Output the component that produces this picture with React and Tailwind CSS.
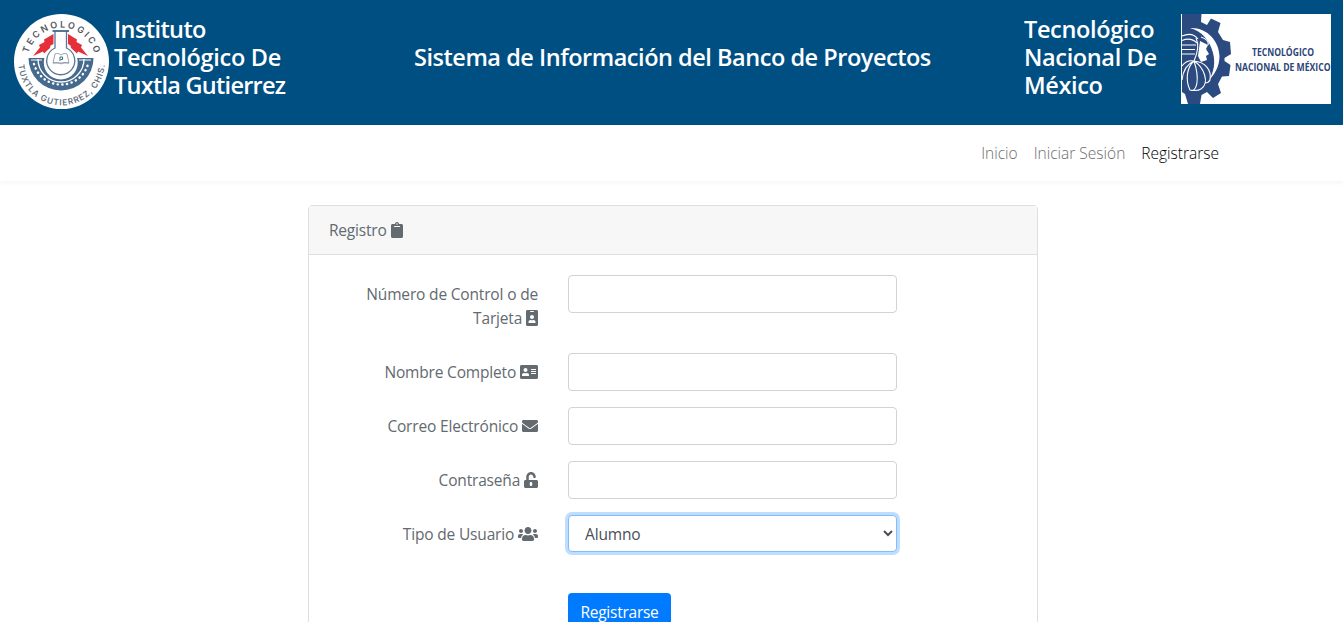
import React from "react";
import { FaClipboard, FaIdBadge, FaAddressCard, FaEnvelope, FaUnlockAlt, FaUsers } from "react-icons/fa";

function SealLogo() {
  return (
    <svg className="block size-[95px] shrink-0" viewBox="0 0 95 95">
      <defs>
        <path id="sealTop" d="M13.500 47.500 A34 34 0 0 1 81.500 47.500" />
        <path id="sealBottom" d="M4.500 44 A43.200 43.200 0 1 0 90.500 44" />
      </defs>
      <circle cx="47.5" cy="47.5" r="47.5" fill="#fff" />
      <path d="M39.500 20 L30 25.500 L30.500 28 L25 31 L26 33.500 L19 42 L29 37.500 L30 39.500 L36 34 L36.500 31.500 L39.500 30 Z" fill="#e5303c" />
      <path d="M54 20 L63 25.500 L62.500 28 L68 31 L67 33.500 L74 42 L64 37.500 L63 39.500 L57 34 L56.500 31.500 L54 30 Z" fill="#e5303c" />
      <path d="M14.500 44 H79.500 A32.500 32.500 0 0 1 14.500 44 Z" fill="#456a8d" />
      <path d="M17 46 H28 M65 46 H77" stroke="#fff" strokeWidth="1" />
      <path d="M20 50 A28 28 0 0 0 74 50" fill="none" stroke="#fff" strokeWidth="2.400" strokeLinecap="round" strokeDasharray="0.3 4.400" />
      <path d="M24 45 A23 23 0 0 0 70 45" fill="none" stroke="#fff" strokeWidth="1.300" />
      <path d="M40 17 V33 A17 17 0 1 0 53.500 33 V17 Z" fill="#fff" />
      <path d="M41 17 V34 A14 14 0 1 0 52.500 34 V17" fill="#fff" stroke="#5a7894" strokeWidth="1.300" />
      <path d="M38.500 17 H55" stroke="#456a8d" strokeWidth="1.800" />
      <path d="M41 40 C43 39 45 39.500 47 41 C49 39.500 51 39 53 40 L55 49 H39 Z M39 49 C42 48 45 48.500 47 50 C49 48.500 52 48 55 49" fill="#fff" stroke="#8b98a5" strokeWidth="0.900" />
      <path d="M46 47 V43 H48.500 V45.500 H46.500" fill="none" stroke="#456a8d" strokeWidth="1" />
      <g fill="#55585e" fontFamily="Inter, 'Liberation Sans', sans-serif" fontWeight="600">
        <text fontSize="9" textLength="90" textAnchor="middle"><textPath href="#sealTop" startOffset="50%">TECNOLOGICO</textPath></text>
        <text fontSize="8.300" textLength="130" textAnchor="middle" fill="#66727f"><textPath href="#sealBottom" startOffset="50%">TUXTLA GUTIERREZ, CHIS.</textPath></text>
      </g>
    </svg>
  );
}

function GearLogo() {
  return (
    <svg className="block h-[90px] w-[150px] shrink-0" viewBox="0 0 150 90">
      <rect width="150" height="90" fill="#fff" />
      <path fill="#2b4a80" d="M1 0 H20.500 L20 8 L26 11 L30 4.500 L39.500 9 L37 18 L42 26 L49 28 L50 40 L43.500 44 V47 L49.500 51 L48 62 L41 62.500 L37 70 L40 79 L32 84 L26 78 L20.500 81 L19 90 H7 L4 80 L1 78 Z" />
      <path d="M9 14 C25 13 38 26 38.500 42 C38.500 52 34 60 28 66 C33 58 34.500 48 32 39 C29 27 21 17 9 14 Z" fill="#fff" />
      <path d="M19 27 L27 31 L25 35 L28 40 L25 42 L26 46 L20 48 L17 42 Z" fill="#fff" />
      <g fill="none" stroke="#fff" strokeWidth="1.100">
        <path d="M1 22 C8 19 13 20 17 25 M1 26.500 C7 24 12 25 16 29 M1 31 H15 M1 35.500 H14 M1 40 H14" />
        <path d="M15 24 C18 30 17 38 13 47 M20 23 C26 25 28 28 27 31" />
        <path d="M13 47 C6 53 4 66 9 76 C16 79 19 65 13 47 M13 47 C23 53 29 69 20 75 C17 77 14 77 9 76 M13 47 C24 48 31 56 29 66 C28 68 26 69 24 69 M13 47 C6 50 2 57 1 66 M13 47 C8 46 4 48 1 52" />
      </g>
      <g fill="#2c4577" fontFamily="'Open Sans', sans-serif" fontWeight="700">
        <text x="71" y="41.500" fontSize="10" textLength="62" lengthAdjust="spacingAndGlyphs">TECNOLÓGICO</text>
        <text x="54" y="57" fontSize="10.500" textLength="95.500" lengthAdjust="spacingAndGlyphs">NACIONAL DE MÉXICO</text>
      </g>
    </svg>
  );
}

const iconBase = "inline-block h-4 align-[-2px] ";

function Row({ label, icon: Icon, iconWidth, children }) {
  return (
    <div className="mb-4 flex">
      <label className="w-[229px] shrink-0 py-[7px] text-right leading-6 tracking-[-0.17px] whitespace-nowrap">
        {label} <Icon className={iconBase + iconWidth} />
      </label>
      <div className="ml-[30px] w-[329px]">{children}</div>
    </div>
  );
}

const control = "block w-full rounded-[4px] border bg-white text-[15.5px] text-[#495057] outline-none ";
const inputClass = control + "h-[38px] border-[#ced4da]";

export default function App() {
  return (
    <div className="h-[622px] overflow-hidden bg-white font-['Open_Sans','Noto_Sans',sans-serif] text-[15.5px] text-[#636a70]">
      <header className="flex h-[125px] bg-[#004f83] pt-[14px] pl-[14px] text-[23.5px] leading-7 font-semibold text-white">
        <SealLogo />
        <h4 className="ml-[5px] w-[200px] pt-px">
          <span className="block tracking-[-0.6px]">Instituto</span>
          <span className="block tracking-[-0.3px]">Tecnológico De</span>
          <span className="block tracking-[-0.74px]">Tuxtla Gutierrez</span>
        </h4>
        <h4 className="ml-[100px] w-[610px] pt-[29px] tracking-[-0.47px] whitespace-nowrap">Sistema de Información del Banco de Proyectos</h4>
        <h4 className="w-[157px] pt-px tracking-[-0.36px]">Tecnológico<br />Nacional De<br />México</h4>
        <GearLogo />
      </header>
      <nav className="flex h-14 items-center justify-end gap-4 bg-white pt-0.5 pr-[124px] font-light text-[#6c6c6c] shadow-[0_2px_4px_rgba(0,0,0,0.04)]">
        <a>Inicio</a>
        <a>Iniciar Sesión</a>
        <a className="text-black">Registrarse</a>
      </nav>
      <main className="pt-6 pl-[308px]">
        <section className="h-[520px] w-[730px] rounded-[4px] border border-[#dfdfdf] bg-white">
          <div className="h-[49px] border-b border-[#dfdfdf] bg-[#f7f7f7] pt-3 pl-5 leading-6 tracking-[-0.2px] [word-spacing:1px]">
            Registro <FaClipboard className={iconBase + "w-3"} />
          </div>
          <form className="pt-5">
            <Row label={<>Número de Control o de<br />Tarjeta</>} icon={FaIdBadge} iconWidth="w-3"><input className={inputClass} /></Row>
            <Row label="Nombre Completo" icon={FaAddressCard} iconWidth="w-[18px]"><input className={inputClass} /></Row>
            <Row label="Correo Electrónico" icon={FaEnvelope} iconWidth="w-4"><input className={inputClass} /></Row>
            <Row label="Contraseña" icon={FaUnlockAlt} iconWidth="w-3.5"><input className={inputClass} /></Row>
            <Row label="Tipo de Usuario" icon={FaUsers} iconWidth="w-5">
              <select className={control + "h-[37px] border-[#80bdff] pr-[1px] pl-3 tracking-[-0.15px] shadow-[0_0_0_3px_#bfdeff]"}>
                <option>Alumno</option>
              </select>
            </Row>
            <button type="button" className="mt-6 ml-[259px] h-[38px] w-[103px] rounded-[4px] bg-[#007bff] pt-0.5 tracking-[-0.25px] text-white">Registrarse</button>
          </form>
        </section>
      </main>
    </div>
  );
}
